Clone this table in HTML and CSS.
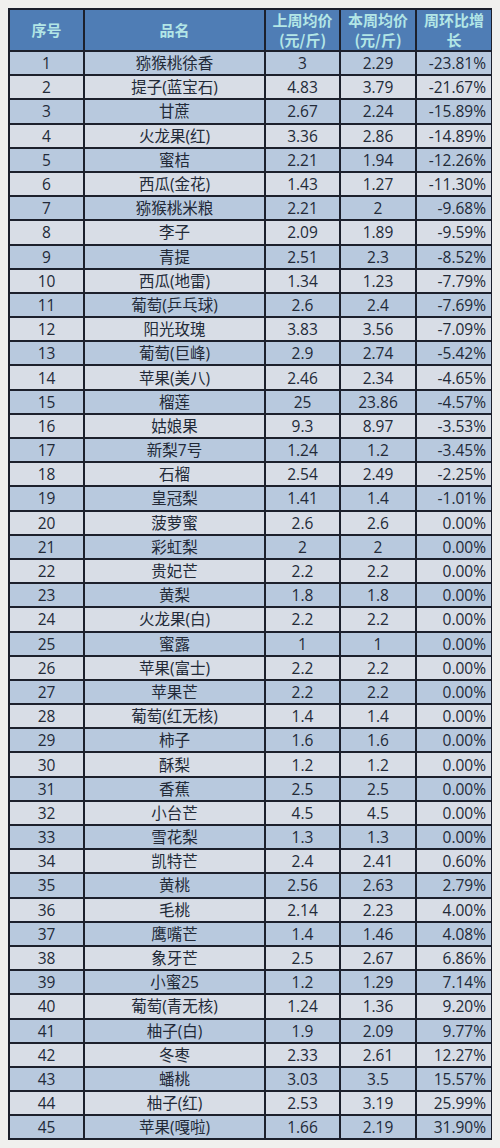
FILE: index.html
```html
<!DOCTYPE html>
<html lang="zh">
<head>
<meta charset="utf-8">
<title>水果价格周环比</title>
<link rel="stylesheet" href="styles.css">
</head>
<body>
<table class="price-table">
<colgroup>
<col class="c-no"><col class="c-name"><col class="c-p"><col class="c-p2"><col class="c-pct">
</colgroup>
<thead>
<tr><th>序号</th><th>品名</th><th>上周均价<br>(元/斤)</th><th>本周均价<br>(元/斤)</th><th>周环比增<br>长</th></tr>
</thead>
<tbody>
<tr><td>1</td><td>猕猴桃徐香</td><td>3</td><td>2.29</td><td class="pct">-23.81%</td></tr>
<tr><td>2</td><td>提子(蓝宝石)</td><td>4.83</td><td>3.79</td><td class="pct">-21.67%</td></tr>
<tr><td>3</td><td>甘蔗</td><td>2.67</td><td>2.24</td><td class="pct">-15.89%</td></tr>
<tr><td>4</td><td>火龙果(红)</td><td>3.36</td><td>2.86</td><td class="pct">-14.89%</td></tr>
<tr><td>5</td><td>蜜桔</td><td>2.21</td><td>1.94</td><td class="pct">-12.26%</td></tr>
<tr><td>6</td><td>西瓜(金花)</td><td>1.43</td><td>1.27</td><td class="pct">-11.30%</td></tr>
<tr><td>7</td><td>猕猴桃米粮</td><td>2.21</td><td>2</td><td class="pct">-9.68%</td></tr>
<tr><td>8</td><td>李子</td><td>2.09</td><td>1.89</td><td class="pct">-9.59%</td></tr>
<tr><td>9</td><td>青提</td><td>2.51</td><td>2.3</td><td class="pct">-8.52%</td></tr>
<tr><td>10</td><td>西瓜(地雷)</td><td>1.34</td><td>1.23</td><td class="pct">-7.79%</td></tr>
<tr><td>11</td><td>葡萄(乒乓球)</td><td>2.6</td><td>2.4</td><td class="pct">-7.69%</td></tr>
<tr><td>12</td><td>阳光玫瑰</td><td>3.83</td><td>3.56</td><td class="pct">-7.09%</td></tr>
<tr><td>13</td><td>葡萄(巨峰)</td><td>2.9</td><td>2.74</td><td class="pct">-5.42%</td></tr>
<tr><td>14</td><td>苹果(美八)</td><td>2.46</td><td>2.34</td><td class="pct">-4.65%</td></tr>
<tr><td>15</td><td>榴莲</td><td>25</td><td>23.86</td><td class="pct">-4.57%</td></tr>
<tr><td>16</td><td>姑娘果</td><td>9.3</td><td>8.97</td><td class="pct">-3.53%</td></tr>
<tr><td>17</td><td>新梨7号</td><td>1.24</td><td>1.2</td><td class="pct">-3.45%</td></tr>
<tr><td>18</td><td>石榴</td><td>2.54</td><td>2.49</td><td class="pct">-2.25%</td></tr>
<tr><td>19</td><td>皇冠梨</td><td>1.41</td><td>1.4</td><td class="pct">-1.01%</td></tr>
<tr><td>20</td><td>菠萝蜜</td><td>2.6</td><td>2.6</td><td class="pct">0.00%</td></tr>
<tr><td>21</td><td>彩虹梨</td><td>2</td><td>2</td><td class="pct">0.00%</td></tr>
<tr><td>22</td><td>贵妃芒</td><td>2.2</td><td>2.2</td><td class="pct">0.00%</td></tr>
<tr><td>23</td><td>黄梨</td><td>1.8</td><td>1.8</td><td class="pct">0.00%</td></tr>
<tr><td>24</td><td>火龙果(白)</td><td>2.2</td><td>2.2</td><td class="pct">0.00%</td></tr>
<tr><td>25</td><td>蜜露</td><td>1</td><td>1</td><td class="pct">0.00%</td></tr>
<tr><td>26</td><td>苹果(富士)</td><td>2.2</td><td>2.2</td><td class="pct">0.00%</td></tr>
<tr><td>27</td><td>苹果芒</td><td>2.2</td><td>2.2</td><td class="pct">0.00%</td></tr>
<tr><td>28</td><td>葡萄(红无核)</td><td>1.4</td><td>1.4</td><td class="pct">0.00%</td></tr>
<tr><td>29</td><td>柿子</td><td>1.6</td><td>1.6</td><td class="pct">0.00%</td></tr>
<tr><td>30</td><td>酥梨</td><td>1.2</td><td>1.2</td><td class="pct">0.00%</td></tr>
<tr><td>31</td><td>香蕉</td><td>2.5</td><td>2.5</td><td class="pct">0.00%</td></tr>
<tr><td>32</td><td>小台芒</td><td>4.5</td><td>4.5</td><td class="pct">0.00%</td></tr>
<tr><td>33</td><td>雪花梨</td><td>1.3</td><td>1.3</td><td class="pct">0.00%</td></tr>
<tr><td>34</td><td>凯特芒</td><td>2.4</td><td>2.41</td><td class="pct">0.60%</td></tr>
<tr><td>35</td><td>黄桃</td><td>2.56</td><td>2.63</td><td class="pct">2.79%</td></tr>
<tr><td>36</td><td>毛桃</td><td>2.14</td><td>2.23</td><td class="pct">4.00%</td></tr>
<tr><td>37</td><td>鹰嘴芒</td><td>1.4</td><td>1.46</td><td class="pct">4.08%</td></tr>
<tr><td>38</td><td>象牙芒</td><td>2.5</td><td>2.67</td><td class="pct">6.86%</td></tr>
<tr><td>39</td><td>小蜜25</td><td>1.2</td><td>1.29</td><td class="pct">7.14%</td></tr>
<tr><td>40</td><td>葡萄(青无核)</td><td>1.24</td><td>1.36</td><td class="pct">9.20%</td></tr>
<tr><td>41</td><td>柚子(白)</td><td>1.9</td><td>2.09</td><td class="pct">9.77%</td></tr>
<tr><td>42</td><td>冬枣</td><td>2.33</td><td>2.61</td><td class="pct">12.27%</td></tr>
<tr><td>43</td><td>蟠桃</td><td>3.03</td><td>3.5</td><td class="pct">15.57%</td></tr>
<tr><td>44</td><td>柚子(红)</td><td>2.53</td><td>3.19</td><td class="pct">25.99%</td></tr>
<tr><td>45</td><td>苹果(嘎啦)</td><td>1.66</td><td>2.19</td><td class="pct">31.90%</td></tr>
</tbody>
</table>
</body>
</html>
```

FILE: styles.css
```css
html, body {
  background: #f0f0ee;
}
body {
  margin: 8px;
  font-family: "Open Sans", "Noto Sans CJK SC", sans-serif;
  color: #222a38;
}
.price-table {
  width: 483px;
  border-collapse: collapse;
  table-layout: fixed;
  font-size: 15.5px;
}
.c-no { width: 75px; }
.c-name { width: 181px; }
.c-p { width: 75px; }
.c-p2 { width: 76px; }
.c-pct { width: 76px; }
.price-table th,
.price-table td {
  border: 2px solid #1c202c;
  padding: 0;
  text-align: center;
  white-space: nowrap;
  overflow: hidden;
}
.price-table th {
  background: #4f7db5;
  color: #b3e6e6;
  font-weight: bold;
  font-family: "Noto Sans CJK SC", sans-serif;
  font-size: 15px;
  height: 40px;
  line-height: 20px;
}
.price-table td {
  height: 22.2px;
  line-height: 20px;
}
.price-table tbody tr:nth-child(odd) td {
  background: #b8c9de;
}
.price-table tbody tr:nth-child(even) td {
  background: #d8dde6;
}
.price-table td.pct {
  text-align: right;
  padding-right: 5px;
}
```
